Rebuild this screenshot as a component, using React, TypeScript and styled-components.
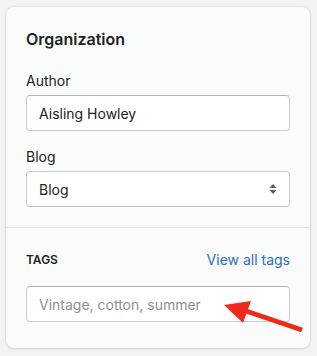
import React, { FC } from 'react';
import styled, { createGlobalStyle } from 'styled-components';

const Global = createGlobalStyle`
    html, body {
        margin: 0;
        padding: 0;
        background: #f3f3f3;
        font-family: Inter, "Noto Sans", sans-serif;
        color: #202223;
    }
`;

const Page = styled.div`
    padding: 7px 7px 8px 6px;
`;

const Card = styled.div`
    position: relative;
    background: #fafbfb;
    border-radius: 8px;
    box-shadow: 0 0 0 1px rgba(63, 63, 68, 0.05), 0 1px 3px 0 rgba(63, 63, 68, 0.15);
`;

const Section = styled.div<{ $last?: boolean }>`
    padding: ${(p) => (p.$last ? '22px 20px 26px' : '20px')};
    border-top: ${(p) => (p.$last ? '1px solid #e1e3e5' : 'none')};
`;

const Heading = styled.h2`
    margin: 0;
    font-size: 16px;
    line-height: 24px;
    font-weight: 600;
`;

const Field = styled.div`
    margin-top: 16px;
    &:first-of-type {
        margin-top: 20px;
    }
`;

const Label = styled.div`
    font-size: 14px;
    line-height: 20px;
    margin-bottom: 4px;
`;

const Input = styled.input`
    box-sizing: border-box;
    width: 100%;
    height: 36px;
    padding: 0 12px;
    border: 1px solid #c9cccf;
    border-top-color: #aeb4b9;
    border-bottom-color: #c9cccf;
    border-radius: 4px;
    background: #fff;
    font-family: inherit;
    font-size: 14px;
    color: #202223;
    outline: none;
    &::placeholder {
        color: #8c9196;
    }
`;

const SelectBox = styled.div`
    box-sizing: border-box;
    display: flex;
    align-items: center;
    justify-content: space-between;
    height: 36px;
    padding: 0 12px;
    border: 1px solid #c9cccf;
    border-bottom-color: #babfc3;
    border-radius: 4px;
    background: #fff;
    font-size: 14px;
`;

const Row = styled.div`
    display: flex;
    align-items: center;
    justify-content: space-between;
    margin-bottom: 16px;
`;

const Subheading = styled.div`
    font-size: 12px;
    line-height: 20px;
    font-weight: 600;
    text-transform: uppercase;
`;

const Link = styled.a`
    font-size: 14px;
    line-height: 20px;
    color: #2c6ecb;
    text-decoration: none;
`;

const Arrow = styled.svg`
    position: absolute;
    left: 216px;
    top: 286px;
    pointer-events: none;
`;

const Caret: FC = () => (
    <svg width="8" height="12" viewBox="0 0 8 12">
        <path d="M4 1 L7.5 5 H0.5 Z" fill="#5c5f62" />
        <path d="M4 11 L7.5 7 H0.5 Z" fill="#5c5f62" />
    </svg>
);

const App: FC = () => (
    <>
        <Global />
        <Page>
            <Card>
                <Section>
                    <Heading>Organization</Heading>
                    <Field>
                        <Label>Author</Label>
                        <Input defaultValue="Aisling Howley" />
                    </Field>
                    <Field>
                        <Label>Blog</Label>
                        <SelectBox>
                            <span>Blog</span>
                            <Caret />
                        </SelectBox>
                    </Field>
                </Section>
                <Section $last>
                    <Row>
                        <Subheading>Tags</Subheading>
                        <Link href="#">View all tags</Link>
                    </Row>
                    <Input placeholder="Vintage, cotton, summer" />
                </Section>
                <Arrow width="90" height="45" viewBox="0 0 90 45">
                    <line x1="24" y1="18" x2="80" y2="37" stroke="#ef2a1d" strokeWidth="5" strokeLinecap="butt" />
                    <polygon points="2,12 29,8 21,30" fill="#ef2a1d" />
                </Arrow>
            </Card>
        </Page>
    </>
);

export default App;
